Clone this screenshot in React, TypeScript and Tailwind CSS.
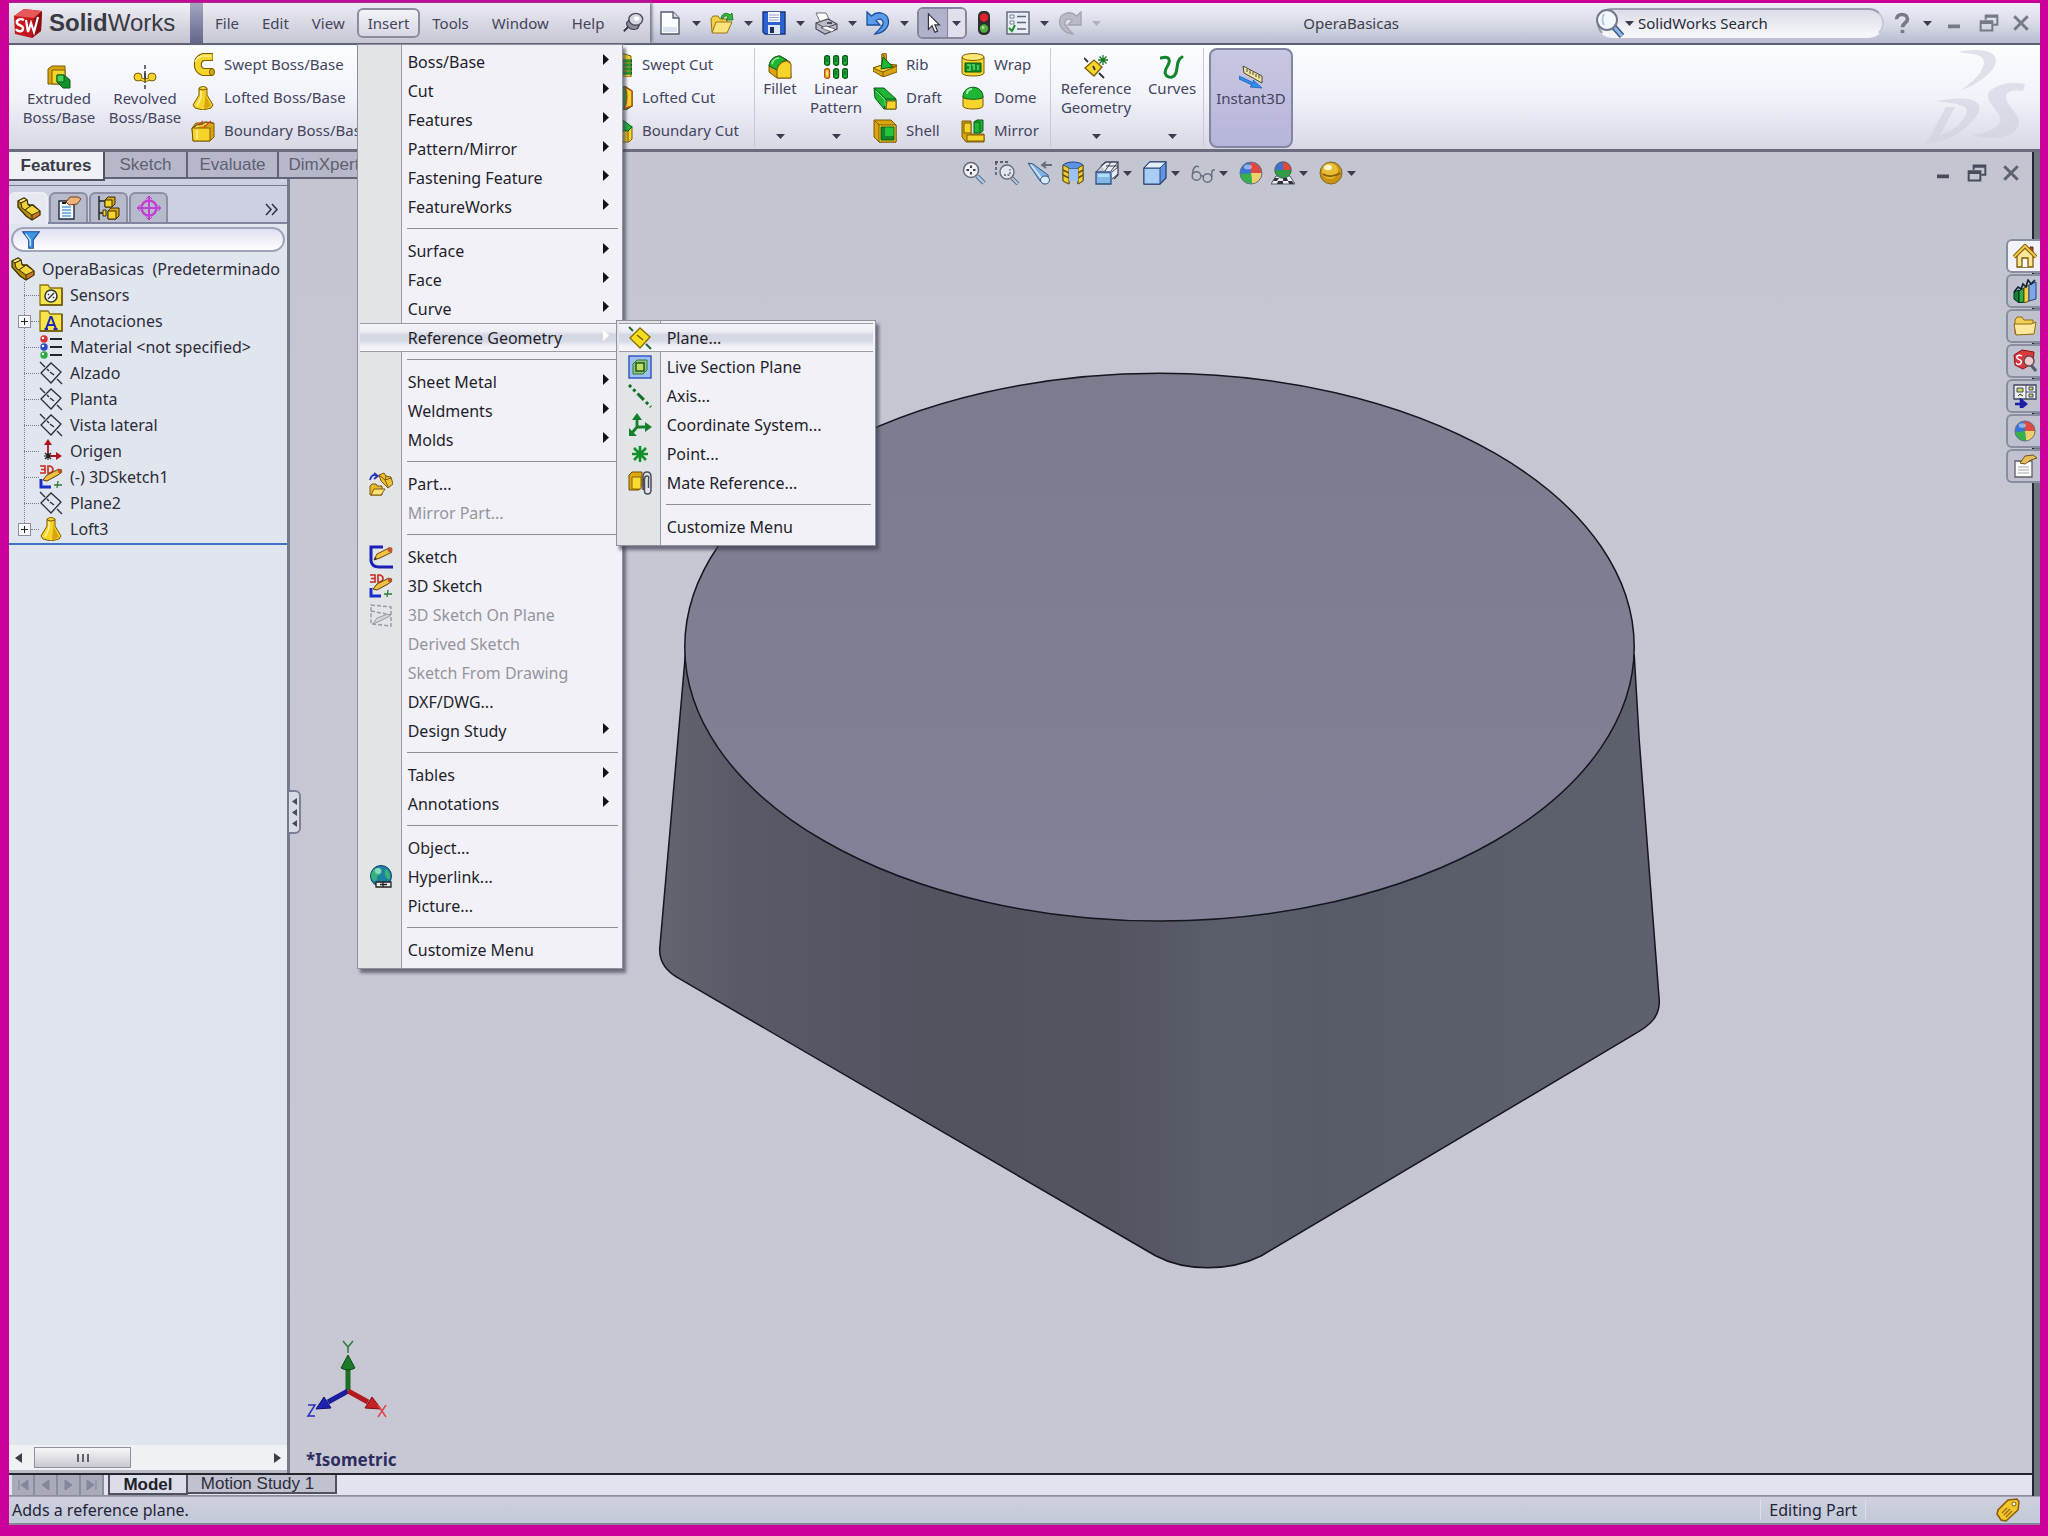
import React from "react";

type IconProps = { s?: number };
const Y = "#f6d42a";
const YD = "#d9a40c";
const YS = "#7d5a06";
const G = "#1fb636";
const GS = "#0b5a18";

function Ic({ s = 24, children, vb = "0 0 24 24" }: { s?: number; children: React.ReactNode; vb?: string }) {
  return (
    <svg width={s} height={s} viewBox={vb} fill="none" aria-hidden="true" className="block shrink-0">
      {children}
    </svg>
  );
}

const Down = ({ light = false }: { light?: boolean }) => (
  <svg width="9" height="5" viewBox="0 0 9 5" aria-hidden="true" className="block shrink-0">
    <path d="M0 0H9L4.5 5Z" fill={light ? "#b0b1bf" : "#3c3c4e"} />
  </svg>
);

/* ---------- title bar icons ---------- */
const LogoIcon = () => (
  <Ic s={32} vb="0 0 32 32">
    <path d="M2 9 12 2 30 4 29 24 20 31 3 27Z" fill="#c4161c" />
    <path d="M2 9 12 2 30 4 22 11Z" fill="#e8575a" />
    <path d="M22 11 30 4 29 24 20 31Z" fill="#8f0d12" />
    <path d="M12 13C8 11 4 13 5 16S12 18 11 22 5 24 4 22" stroke="#fff" strokeWidth="2.4" />
    <path d="M14 13 16 25 19 16 22 25 26 10" stroke="#fff" strokeWidth="2.2" />
  </Ic>
);
const PinIcon = () => (
  <Ic s={22}>
    <path d="M2 21 9 14" stroke="#33343f" strokeWidth="2" />
    <path d="M5 12C5 17 11 21 17 18L19 14 9 7Z" fill="#8b8d9b" stroke="#3d3e4c" strokeWidth="1.3" />
    <ellipse cx="15" cy="8" rx="7.500" ry="6.500" fill="#d4d6e0" stroke="#4c4d5c" strokeWidth="1.5" />
    <ellipse cx="16" cy="7" rx="3" ry="2.500" fill="#fff" />
  </Ic>
);
const NewIcon = () => (
  <Ic>
    <path d="M3 1H15L21 7V23H3Z" fill="#fbfcff" stroke="#555a6c" strokeWidth="1.4" />
    <path d="M15 1V7H21" fill="#d7dbe8" stroke="#555a6c" strokeWidth="1.3" />
    <path d="M5 16H19V21H5Z" fill="#d9e2ee" />
  </Ic>
);
const OpenIcon = () => (
  <Ic>
    <path d="M1 8 3 5H8L10 8H17V21H2Z" fill="#f3cf45" stroke="#9a7210" />
    <path d="M2 22 6 11H22L17 22Z" fill="#fbe57a" stroke="#9a7210" />
    <path d="M11 7C12 2 17 1 20 4L22 2 23 9 16 9 18 6C16 4 14 5 13 8Z" fill="#35b53c" stroke="#14701d" strokeWidth=".8" />
  </Ic>
);
const SaveIcon = () => (
  <Ic>
    <path d="M1 1H23V23H3L1 21Z" fill="#2c62d0" stroke="#17357e" strokeWidth="1.4" />
    <path d="M6 1H18V11H6Z" fill="#f5f7fc" />
    <path d="M7 4H17M7 6.500H17M7 9H17" stroke="#9aa6bf" />
    <path d="M6 14H18V23H6Z" fill="#dfe4ef" />
    <path d="M8 16H12V22H8Z" fill="#1b2e66" />
  </Ic>
);
const PrintIcon = () => (
  <Ic>
    <path d="M2 2H12L16 10 7 13Z" fill="#fff" stroke="#6c7080" />
    <path d="M2 12 14 8 23 13 23 18 11 23 2 18Z" fill="#b9bcc8" stroke="#4a4c59" strokeWidth="1.2" />
    <path d="M2 12 11 17 23 13" stroke="#4a4c59" />
    <path d="M7 17 18 21 21 18 12 15Z" fill="#fff" stroke="#555" strokeWidth=".8" />
    <path d="M13 12H18" stroke="#2a2b33" strokeWidth="1.5" />
  </Ic>
);
const UndoIcon = ({ grey = false, flip = false }: { grey?: boolean; flip?: boolean }) => (
  <Ic>
    <path
      transform={flip ? "translate(24 0) scale(-1 1)" : undefined}
      d="M1 1V14H14L10 9.500C13 7 18 8 17 13 16 17 12 19 9 23 17 22 23 17 22.500 10 22 2 12-1 5.500 5Z"
      fill={grey ? "#b9bac6" : "#5a9bea"}
      stroke={grey ? "#a2a3b0" : "#1c4f9e"}
      strokeWidth="1.3"
    />
  </Ic>
);
const CursorIcon = () => (
  <Ic s={22}>
    <path d="M7 2V19L11 15 14 22 17 21 14 14H19Z" fill="#fff" stroke="#33343f" strokeWidth="1.3" />
  </Ic>
);
const TrafficIcon = () => (
  <Ic>
    <rect x="6" y="0" width="12" height="24" rx="5" fill="#2c2f2e" />
    <circle cx="12" cy="6.500" r="4.200" fill="#e0222c" />
    <circle cx="12" cy="17.500" r="4.200" fill="#4fae3f" />
    <circle cx="11" cy="16.500" r="1.500" fill="#a5e08f" />
  </Ic>
);
const OptionsIcon = () => (
  <Ic>
    <rect x="1" y="1" width="22" height="22" fill="#e9edf4" stroke="#5d6478" strokeWidth="1.4" />
    <path d="M4 4H8V7H4ZM4 10H8V13H4Z" fill="#fff" stroke="#6a7ba0" />
    <path d="M3 17 6 20 9 14" stroke="#1c8f2c" strokeWidth="2" />
    <path d="M11 5.500H20M11 11.500H20M11 18H20" stroke="#5d6478" strokeWidth="1.6" />
  </Ic>
);
const HelpIcon = () => (
  <Ic s={22}>
    <path d="M6 8C6 1 18 1 18 8 18 12 12.500 12 12.500 16.500" stroke="#777988" strokeWidth="4" />
    <path d="M10.500 19.500H14.500V23H10.500Z" fill="#777988" />
  </Ic>
);
const MinIcon = ({ c = "#777988" }: { c?: string }) => (
  <Ic s={18}>
    <path d="M4 14H20V19H4Z" fill={c} />
  </Ic>
);
const RestoreIcon = ({ c = "#777988" }: { c?: string }) => (
  <Ic s={20}>
    <path d="M8 8V3H22V14H17M8 4.500H22" stroke={c} strokeWidth="2.400" />
    <path d="M2 10H16V21H2ZM2 12H16" stroke={c} strokeWidth="2.400" />
  </Ic>
);
const CloseIcon = ({ c = "#777988" }: { c?: string }) => (
  <Ic s={18}>
    <path d="M3 3 21 21M21 3 3 21" stroke={c} strokeWidth="4" />
  </Ic>
);

/* ---------- ribbon icons ---------- */
const ExtrudeIcon = () => (
  <Ic>
    <path d="M1 4 5 1H18L18 16 15 19H1Z" fill={YD} stroke={YS} />
    <path d="M5 5H18V19H5Z" fill={Y} stroke={YS} />
    <path d="M10 10H17L23 15V23H16L10 17Z" fill="#12922a" stroke={GS} />
    <path d="M10 10H17V17H10Z" fill="#43d356" stroke={GS} />
  </Ic>
);
const RevolveIcon = () => (
  <Ic>
    <path d="M12 0V4M12 6V18M12 20V24" stroke="#222" strokeWidth="1.300" />
    <path d="M6 13C9 16 15 16 18 13" stroke={YS} strokeWidth="3.500" />
    <circle cx="5" cy="12" r="4" fill={Y} stroke={YS} />
    <circle cx="19" cy="12" r="4" fill={Y} stroke={YS} />
    <path d="M8 14C10 15.500 14 15.500 16 14" stroke={Y} strokeWidth="2" />
    <path d="M12 8V16" stroke="#222" />
  </Ic>
);
const SweptIcon = () => (
  <Ic>
    <path d="M22 4H12A8 8 0 0 0 12 19H22" stroke={YS} strokeWidth="8" />
    <path d="M21.500 4H12A8 8 0 0 0 12 19H21.500" stroke={Y} strokeWidth="5.800" />
    <path d="M20 3H12A9 9 0 0 0 4 9" stroke="#fff2a0" strokeWidth="1.500" />
    <ellipse cx="21" cy="19" rx="2.500" ry="3.500" fill={YD} stroke={YS} />
  </Ic>
);
const LoftIcon = () => (
  <Ic>
    <path d="M8 2 12 0 16 2 16 9 22 19 20 22 12 24 4 22 2 19 8 9Z" fill={Y} stroke={YS} />
    <path d="M15 3 15 10 20 20 13 23Z" fill={YD} />
    <path d="M8 3 12 4 16 3" stroke={YS} />
    <path d="M10 5V11L6 20" stroke="#fff2a0" strokeWidth="1.500" />
  </Ic>
);
const BoundaryIcon = () => (
  <Ic>
    <path d="M1 9 5 4H23V18L19 22H2Z" fill={YD} stroke={YS} />
    <path d="M1 9H19V22H2Z" fill={Y} stroke={YS} />
    <path d="M3 9C6 2 10 9 14 3L22 4" stroke={YS} strokeWidth="1.300" fill="#f9e264" />
    <path d="M8 6 12 2M13 8 20 2" stroke="#d33a1a" strokeWidth="1.200" />
    <path d="M6 11V20" stroke="#fff2a0" strokeWidth="1.500" />
  </Ic>
);
const SweptCutIcon = () => (
  <Ic>
    <path d="M4 3 12 0 22 3V24H4Z" fill={Y} stroke={YS} />
    <path d="M8 8H23M8 12H23M8 16H23M8 20H23" stroke={GS} strokeWidth="3" />
    <path d="M9 8H22M9 12H22M9 16H22M9 20H22" stroke={G} strokeWidth="1.500" />
  </Ic>
);
const LoftCutIcon = () => (
  <Ic>
    <path d="M3 6 16 0 23 5V20L17 24H3Z" fill={G} stroke={GS} />
    <path d="M16 1 23 5V20L15 23Q20 12 16 1Z" fill={Y} stroke="#b5480b" strokeWidth="1.400" />
  </Ic>
);
const BoundaryCutIcon = () => (
  <Ic>
    <path d="M3 10H19L23 7V20L20 23H3Z" fill={Y} stroke={YS} />
    <path d="M4 11 14 1 23 8 19 12Z" fill={G} stroke={GS} />
    <path d="M19 12V23" stroke={YS} />
  </Ic>
);
const FilletIcon = () => (
  <Ic>
    <path d="M1 11C2 4 7 1 12 1L22 7 23 23H9L1 17Z" fill={YD} stroke={YS} />
    <path d="M1 11C2 4 7 1 12 1L19 5C13 6 10 10 9 15Z" fill={G} stroke={GS} />
    <path d="M9 15C10 10 14 6 19 6L23 9V23H9Z" fill={Y} stroke={YS} />
    <path d="M4 9C5 5 8 3 11 3" stroke="#9cf0a2" strokeWidth="1.500" />
  </Ic>
);
const LinearIcon = () => (
  <Ic>
    {[0, 1, 2].map((c) =>
      [0, 1].map((r) => {
        const seed = c === 0 && r === 1;
        return (
          <g key={`${c}${r}`} transform={`translate(${c * 9} ${r * 13})`}>
            <rect x=".7" y=".7" width="4.800" height="9.500" rx="2" fill={seed ? "#f3c62c" : G} stroke={seed ? "#c14d14" : GS} strokeWidth="1.400" />
            <path d="M3 3V7" stroke={seed ? "#fff3b0" : "#063"} strokeWidth="1.300" />
          </g>
        );
      })
    )}
  </Ic>
);
const RibIcon = () => (
  <Ic>
    <path d="M9 1 13 0 14 11 24 12V19L10 24 0 18V15L9 12Z" fill={YD} stroke={YS} />
    <path d="M9 1 11 3V14L24 13 10 19 0 15 9 12Z" fill={Y} stroke={YS} />
    <path d="M10 19V24" stroke={YS} />
    <path d="M10 4 20 14 8 16Z" fill={G} stroke={GS} />
  </Ic>
);
const DraftIcon = () => (
  <Ic>
    <path d="M1 2H11L23 13V23H11L2 12Z" fill={G} stroke={GS} />
    <path d="M1 2 13 13H23M13 13 11 23" stroke={GS} />
    <path d="M14 15H23V23H13Z" fill={Y} stroke={YS} />
    <path d="M3 5 12 14V20" stroke="#84ea8e" />
  </Ic>
);
const ShellIcon = () => (
  <Ic>
    <path d="M1 1H18L23 6V23H6L1 18Z" fill={YD} stroke={YS} />
    <path d="M6 6H23V23H6Z" fill={Y} stroke={YS} />
    <path d="M8 8H21V21H8Z" fill="#13862a" stroke={GS} />
    <path d="M12 8.500H20.500V17H12Z" fill="#25c23b" />
    <path d="M2 2 6 6" stroke={YS} />
  </Ic>
);
const WrapIcon = () => (
  <Ic>
    <path d="M1 4V20C1 24 23 24 23 20V4Z" fill={Y} stroke={YS} />
    <ellipse cx="12" cy="4" rx="11" ry="3.500" fill="#fbe771" stroke={YS} />
    <path d="M4 10H20V19H4Z" fill="#158a2a" stroke={GS} />
    <path d="M6 12H9V17H6M11 12H13V17M17 12V17" stroke="#59e06a" strokeWidth="1.500" />
  </Ic>
);
const DomeIcon = () => (
  <Ic>
    <path d="M2 10V20C2 24 22 24 22 20V10Z" fill={Y} stroke={YS} />
    <path d="M2 11C2 -2 22 -2 22 11 22 14 2 14 2 11Z" fill={G} stroke={GS} />
    <path d="M6 8C6 5 8 3 11 3" stroke="#9cf0a2" strokeWidth="2" />
  </Ic>
);
const MirrorIcon = () => (
  <Ic>
    <path d="M1 2H10V15H23V23H5L1 18Z" fill={YD} stroke={YS} />
    <path d="M3 4H10V14H3ZM6 16H23V22H6Z" fill={Y} stroke={YS} />
    <path d="M13 3 16 1H22V12L19 14H13Z" fill={G} stroke={GS} />
    <path d="M13 3H19V14" stroke={GS} />
  </Ic>
);
const RefGeoIcon = () => (
  <Ic>
    <path d="M1 13 10 5 18 12 10 21Z" fill={Y} stroke={YS} strokeWidth="1.300" />
    <path d="M0 3 4 7M15 18 20 23M9 11 11 15" stroke="#333" strokeWidth="1.800" />
    <path d="M19 0V10M14 5H24M15.500 1.500 22.500 8.500M22.500 1.500 15.500 8.500" stroke="#147a22" strokeWidth="1.300" />
  </Ic>
);
const CurvesIcon = () => (
  <Ic>
    <path d="M1 3C10 0 11 6 7 12 3 18 6 23 12 22 20 20 14 6 22 2" stroke="#12852a" strokeWidth="3" strokeLinecap="round" />
  </Ic>
);
const InstantIcon = () => (
  <Ic>
    <path d="M4 1 23 11V18L5 8Z" fill="#f1e7a4" stroke="#4b4634" />
    <path d="M8 4V7M11 5.500V9M14 7V10M17 9V12M20 10V13.500" stroke="#4b4634" />
    <path d="M0 11 15 18 14 15 23 23 11 22 13 20 0 14Z" fill="#2f8df0" stroke="#1a5fc0" strokeWidth=".8" />
  </Ic>
);

/* ---------- heads-up view icons ---------- */
const ZoomFitIcon = () => (
  <Ic>
    <path d="M15 15 22 22" stroke="#55607a" strokeWidth="4.500" />
    <path d="M15 15 22 22" stroke="#a9c5e8" strokeWidth="2.500" />
    <circle cx="9" cy="9" r="7.500" fill="#eef0f5" stroke="#666a7c" strokeWidth="1.500" />
    <path d="M9 4.500V7M9 11V13.500M4.500 9H7M11 9H13.500" stroke="#3c3d48" strokeWidth="2" />
  </Ic>
);
const ZoomAreaIcon = () => (
  <Ic>
    <path d="M0 1H15M1 1V14" stroke="#3d3e4c" strokeDasharray="3 2" strokeWidth="1.300" />
    <path d="M17 17 23 23" stroke="#666a7c" strokeWidth="4" />
    <path d="M17 17 23 23" stroke="#b4c4da" strokeWidth="2" />
    <circle cx="12" cy="11" r="7" fill="#e3e5ee" stroke="#666a7c" strokeWidth="1.400" />
    <path d="M9 14H15V8" stroke="#55586a" strokeDasharray="2 1.500" strokeWidth="1.300" />
  </Ic>
);
const PrevViewIcon = () => (
  <Ic>
    <path d="M0 2 5 3 20 14 21 20 16 23 12 20Z" fill="#7fb2e8" stroke="#38537f" />
    <path d="M3 4 14 18" stroke="#d9ecfb" strokeWidth="1.500" />
    <ellipse cx="17" cy="19" rx="4.500" ry="4" fill="#d6ebfb" stroke="#38537f" />
    <path d="M24 4H15M18 1 14 4 18 7" stroke="#666a7c" strokeWidth="1.800" />
  </Ic>
);
const SectionIcon = () => (
  <Ic>
    <path d="M2 4C6 0 18 0 22 4V20L17 23V8H8V23L2 20Z" fill="#5b93e3" stroke="#25427f" />
    <path d="M2 4 8 7V23L2 20ZM17 7 22 4V20L17 23Z" fill="#f0cf35" stroke="#6b5208" />
    <path d="M2 9 8 12M2 14 8 17M17 12 22 9M17 17 22 14" stroke="#6b5208" strokeWidth="1.500" />
    <path d="M8 8H17V20H8Z" fill="#9cc2f2" />
  </Ic>
);
const ViewOrientIcon = () => (
  <Ic>
    <path d="M6 5 11 1H23V14L19 18" fill="#e8ebf2" stroke="#3d4356" strokeWidth="1.300" />
    <path d="M1 11 10 1M10 10 16 1M16 10 23 1M17 18 23 13M17 11 23 6M11 5H23" stroke="#3d4356" />
    <path d="M1 11H16V23H1Z" fill="#83b7ea" stroke="#31507f" strokeWidth="1.300" />
    <path d="M3 13H14V16H3Z" fill="#b8dcf7" />
  </Ic>
);
const DisplayIcon = () => (
  <Ic>
    <path d="M1 7 7 1H23V17L17 23H1Z" fill="#5f95e4" stroke="#2c4377" strokeWidth="1.300" />
    <path d="M1 7H17V23H1Z" fill="#a9cdf3" stroke="#2c4377" />
    <path d="M1 7 7 1H23L17 7Z" fill="#e4effb" stroke="#2c4377" />
  </Ic>
);
const GlassesIcon = () => (
  <Ic>
    <circle cx="5.500" cy="15" r="4.300" stroke="#6a6e80" strokeWidth="1.500" />
    <circle cx="16.500" cy="17" r="4.300" stroke="#6a6e80" strokeWidth="1.500" />
    <path d="M10 15C11 14 12 15 12 16M1.500 13C2 6 5 4 8 6M21 16C20 9 22 8 24 9" stroke="#6a6e80" strokeWidth="1.500" />
  </Ic>
);
const BallIcon = ({ s = 24 }: IconProps) => (
  <Ic s={s}>
    <circle cx="12" cy="12" r="11" fill="#3573dd" />
    <path d="M12 12 11 1A11 11 0 0 1 23 12Z" fill="#dc4a44" />
    <path d="M12 12H23A11 11 0 0 1 13 23Z" fill="#ecd06a" />
    <path d="M12 12 13 23A11 11 0 0 1 1 13Z" fill="#35b04a" />
    <circle cx="12" cy="12" r="11" stroke="#6c7187" strokeWidth="1" />
    <ellipse cx="9" cy="6" rx="4" ry="2.500" fill="#fff" opacity=".45" />
  </Ic>
);
const SceneIcon = () => (
  <Ic>
    <path d="M0 23 5 15H19L24 23Z" fill="#eef0f5" stroke="#55586a" />
    <path d="M4 17H8L6 20H2ZM12 17H16L17 20H12ZM7 20H12V23H6ZM17 20H21L23 23H18Z" fill="#32333c" />
    <g transform="translate(3 0) scale(.75)">
      <circle cx="12" cy="12" r="11" fill="#3f72cf" />
      <path d="M12 12V1A11 11 0 0 1 23 12Z" fill="#e2473c" />
      <path d="M1 12H23A11 11 0 0 1 1 12Z" fill="#2f9f45" />
      <circle cx="12" cy="12" r="11" stroke="#4a4e60" />
    </g>
  </Ic>
);
const GoldBallIcon = () => (
  <Ic>
    <circle cx="12" cy="12" r="11" fill="#c9920f" stroke="#7a6a3a" />
    <circle cx="11" cy="10" r="8" fill="#e9bd35" />
    <path d="M4 13C8 16 16 16 21 12" stroke="#8f6208" strokeWidth="2" />
    <ellipse cx="9" cy="6.500" rx="4" ry="2.800" fill="#fff6cf" />
  </Ic>
);

/* ---------- tree / manager icons ---------- */
const PartIcon = () => (
  <Ic>
    <path d="M1 4 7 1 10 3 11 8 16 8 23 14 23 18 15 23 9 19 1 10Z" fill="#b98d0c" stroke="#3d2e05" strokeWidth="1.300" />
    <path d="M1 4 7 1 10 3 4 6Z" fill="#fbe670" stroke="#3d2e05" />
    <path d="M4 6 10 3 11 8 14 9 8 13 5 11Z" fill="#f0d137" stroke="#3d2e05" />
    <path d="M8 13 15 8 23 14 15 18Z" fill="#f3d63c" stroke="#3d2e05" />
    <path d="M15 18V23" stroke="#3d2e05" />
    <path d="M16 19 22 15.500V18L16 21.500Z" fill="#d9702c" />
  </Ic>
);
const PropIcon = () => (
  <Ic>
    <path d="M2 5H17V23H2Z" fill="#f5f9fd" stroke="#222a3c" strokeWidth="1.400" />
    <path d="M5 11H14M5 14H14M5 17H14M5 20H14" stroke="#5aa2d8" strokeWidth="1.300" />
    <path d="M9 6 13 1H21L24 3 20 8 12 9Z" fill="#efb27b" stroke="#74401a" />
    <path d="M5 7H9" stroke="#222" strokeWidth="2" />
  </Ic>
);
const ConfigIcon = () => (
  <Ic>
    <path d="M2 0V24M2 5H9M2 17H9" stroke="#222" strokeWidth="1.400" />
    <path d="M8 4 11 1H18V8L15 11H8ZM11 15 14 12H22V20L19 23H11Z" fill={YD} stroke="#3d2e05" />
    <path d="M8 4H15V11H8ZM11 15H19V23H11Z" fill={Y} stroke="#3d2e05" />
    <path d="M6 14H9V20H6Z" fill={Y} stroke="#3d2e05" />
  </Ic>
);
const DimIcon = () => (
  <Ic>
    <circle cx="12" cy="12" r="7.500" stroke="#c23fd6" strokeWidth="2.400" />
    <path d="M12 0V24M0 12H24" stroke="#c23fd6" strokeWidth="2" />
    <path d="M9 3 12 0 15 3M9 21 12 24 15 21M3 9 0 12 3 15M21 9 24 12 21 15" stroke="#c23fd6" />
  </Ic>
);
const FunnelIcon = () => (
  <Ic s={18}>
    <path d="M1 1H23L15 12V23H9V12Z" fill="#3f94e6" stroke="#1a4a94" strokeWidth="1.500" />
    <path d="M5 4 11 12V20" stroke="#bfe0fb" strokeWidth="2" />
  </Ic>
);
const Folder = ({ children }: { children: React.ReactNode }) => (
  <Ic>
    <path d="M1 2H9L11 5H23V22H1Z" fill="#f7e34a" stroke="#8f7612" strokeWidth="1.300" />
    <path d="M23 5V22H1" stroke="#6e5808" strokeWidth="1.500" />
    {children}
  </Ic>
);
const SensorIcon = () => (
  <Folder>
    <circle cx="12" cy="13" r="6" fill="#f2f4f8" stroke="#333" strokeWidth="1.500" />
    <path d="M9 16 15 10M9 11 10 12M15 15 14 14" stroke="#333" strokeWidth="1.400" />
  </Folder>
);
const AnnotIcon = () => (
  <Folder>
    <path d="M7 20 11.500 8H12.500L17 20M9 16H15M5.500 20H9M14.500 20H18.500" stroke="#1b27b8" strokeWidth="2" />
  </Folder>
);
const MaterialIcon = () => (
  <Ic>
    <circle cx="5" cy="4" r="3.700" fill="#d92f33" />
    <circle cx="5" cy="12" r="3.700" fill="#2a49c8" />
    <circle cx="5" cy="20" r="3.700" fill="#2bab43" />
    <circle cx="4" cy="3" r="1.200" fill="#fff" />
    <circle cx="4" cy="11" r="1.200" fill="#fff" />
    <circle cx="4" cy="19" r="1.200" fill="#fff" />
    <path d="M11 4H23M11 12H23M11 20H23" stroke="#222" strokeWidth="2.200" />
  </Ic>
);
const PlaneIcon = () => (
  <Ic>
    <path d="M2 12 12 2 22 11 12 22Z" stroke="#2c2d38" strokeWidth="1.300" />
    <path d="M1 1 6 6M8 8 10 10M11 11 15 14M18 18 23 23" stroke="#2c2d38" strokeWidth="1.400" />
  </Ic>
);
const OriginIcon = () => (
  <Ic>
    <path d="M9 17V2M9 17H20" stroke="#b01420" strokeWidth="1.800" />
    <path d="M5 6 9 0 13 6ZM17 13 23 17 17 21Z" fill="#b01420" />
    <path d="M5 17H12M9 14V21M6 14 12 20M12 14 6 20" stroke="#222" strokeWidth="1.200" />
  </Ic>
);
const Sketch3DIcon = () => (
  <Ic>
    <path d="M1 1H6V8H1M2 4.500H6M9 1V8H11Q14 7 14 4.500T11 1Z" stroke="#c92a1c" strokeWidth="1.600" />
    <path d="M2 14V22H12M2 22H4" stroke="#1b2ccc" strokeWidth="3" />
    <path d="M18 23 19 16M15 20H23" stroke="#2e7a3a" strokeWidth="1.300" />
    <path d="M4 15 8 10 20 4 23 7 19 10 8 16Z" fill="#eec041" stroke="#5e3d05" />
    <circle cx="21" cy="6" r="2.300" fill="#b8532e" />
  </Ic>
);
const SketchIcon = () => (
  <Ic>
    <path d="M14 2H2V16Q3 22 10 22H24" stroke="#1a1fb8" strokeWidth="3" />
    <path d="M5 15 8 9 20 3 23 7 11 13Z" fill="#f0c545" stroke="#6b4608" />
    <circle cx="21" cy="4.500" r="2.500" fill="#c05a33" />
    <path d="M5 15 6 12 8 14Z" fill="#333" />
  </Ic>
);
const SketchPlaneIcon = () => (
  <Ic>
    <path d="M2 2 22 4V23L2 21ZM2 8 22 12" stroke="#9a9ca4" strokeWidth="1.500" strokeDasharray="4 2" />
    <path d="M4 21 8 15 19 11 21 13 11 18Z" fill="#d4d6da" stroke="#9a9ca4" />
  </Ic>
);
const InsertPartIcon = () => (
  <Ic>
    <path d="M1 8C2 3 5 2 8 4M5 1 9 4 5 7" stroke="#2a35b8" strokeWidth="1.800" />
    <path d="M10 3 15 1 17 4 22 5 24 12 19 16 12 9Z" fill="#eebf33" stroke="#80580a" />
    <path d="M10 3 16 8 17 4M16 8 22 6M16 8 19 15" stroke="#80580a" />
    <path d="M1 14 3 12H7L8 14H13V23H1Z" fill="#e8b82c" stroke="#80580a" />
    <path d="M2 23 5 17H16L12 23Z" fill="#fbe27a" stroke="#80580a" />
  </Ic>
);
const GlobeIcon = () => (
  <Ic>
    <circle cx="12" cy="11" r="10.500" fill="#1c7fa4" stroke="#0d3f66" />
    <path d="M4 5C8 1 14 3 13 7S8 9 8 13 5 17 3 14 2 8 4 5ZM16 4C20 5 22 9 21 14 17 15 15 10 16 4Z" fill="#38b27d" />
    <circle cx="9" cy="6" r="3" fill="#bff0f2" opacity=".6" />
    <path d="M7 17H14V22H7ZM14 17H22V22H14ZM11 19.500H18" fill="#e8eaee" stroke="#222" strokeWidth="1.300" />
  </Ic>
);
const MenuPlaneIcon = () => (
  <Ic>
    <path d="M2 12 12 2 22 11 12 22Z" fill="#f5dc1f" stroke="#8a6d05" strokeWidth="1.300" />
    <path d="M1 1 5 5M18 18 23 23" stroke="#1d6b34" strokeWidth="2" />
    <path d="M9 9 15 14" stroke="#7d5a06" strokeWidth="1.500" />
  </Ic>
);
const LiveSectionIcon = () => (
  <Ic>
    <rect x="1" y="1" width="22" height="22" fill="#9ebdf2" stroke="#3459c4" strokeWidth="1.500" />
    <path d="M5 9 9 5H19V15L15 19H5Z" fill="#8fc27a" stroke="#2e7a32" />
    <path d="M8 8H16V16H8Z" fill="#c4dc5f" stroke="#1e5a22" strokeWidth="1.500" />
  </Ic>
);
const AxisIcon = () => (
  <Ic>
    <path d="M1 1 23 23" stroke="#12702a" strokeWidth="3" strokeDasharray="3 3 3 3 9 3 3 3" />
  </Ic>
);
const CoordIcon = () => (
  <Ic>
    <path d="M9 14V3M9 14H21M9 14 3 21" stroke="#12802a" strokeWidth="2.800" />
    <path d="M4 7 9 0 14 7ZM17 9 24 14 17 19ZM1 15V23H9Z" fill="#12802a" />
  </Ic>
);
const PointIcon = () => (
  <Ic>
    <path d="M12 4V20M4 12H20M6 6 18 18M18 6 6 18" stroke="#12902a" strokeWidth="2.600" />
  </Ic>
);
const MateIcon = () => (
  <Ic>
    <path d="M1 4 4 1H14V15L11 19H1Z" fill="#e0a910" stroke="#6e4c05" />
    <path d="M4 6H13V18H4Z" fill="#f8dc33" stroke="#8a6006" />
    <path d="M15 19V6Q15 1 19 1T23 6V19Q23 23 19.500 23T16.500 19V8Q16.500 5 19 5T20.500 8V17" stroke="#4a4c59" strokeWidth="1.500" />
  </Ic>
);
const TagIcon = () => (
  <Ic>
    <path d="M12 2 21 1 23 4 22 12 10 23 5 22 1 16 2 12Z" fill="#f3c62a" stroke="#8a5a0a" strokeWidth="1.500" />
    <circle cx="18" cy="6" r="2" fill="#fff" stroke="#8a5a0a" />
    <path d="M6 15 11 10M8 17 14 11M10 19 16 13" stroke="#9a6a10" strokeWidth="1.200" />
  </Ic>
);

/* ---------- task pane icons ---------- */
const HomeIcon = () => (
  <Ic>
    <path d="M17 3H20V9H17Z" fill="#b5522a" stroke="#5f2a10" />
    <path d="M4 11V23H20V11L12 4Z" fill="#fae69a" stroke="#7d5a06" strokeWidth="1.300" />
    <path d="M1 13 12 2 23 13" stroke="#7d5a06" strokeWidth="4" />
    <path d="M1 13 12 2 23 13" stroke="#f3c94a" strokeWidth="2" />
    <path d="M9 23V14H15V23" fill="#fff" stroke="#7d5a06" strokeWidth="1.300" />
  </Ic>
);
const LibraryIcon = () => (
  <Ic>
    <path d="M1 13 6 11V24L1 20Z" fill="#15803a" stroke="#052a12" />
    <path d="M6 12 11 9V23L6 24Z" fill="#2ab04a" stroke="#052a12" />
    <path d="M11 9 16 6V22L11 24Z" fill="#f0d049" stroke="#5e4a04" />
    <path d="M16 6 23 3V20L16 22Z" fill="#7ea6e8" stroke="#25427f" />
    <path d="M1 13 5 8 8 10 10 5 13 8 15 1 18 5 22 1" stroke="#123" strokeWidth="1.600" />
  </Ic>
);
const FolderOpenIcon = () => (
  <Ic>
    <path d="M2 6 4 3H9L11 6H20V20H2Z" fill="#f1cf58" stroke="#8f6a10" />
    <path d="M3 21 1 10H18L23 8 21 20Z" fill="#fbe89a" stroke="#8f6a10" />
  </Ic>
);
const SearchRedIcon = () => (
  <Ic>
    <path d="M1 6 9 1 21 3 20 14 10 20 2 16Z" fill="#d83a40" stroke="#8f1218" />
    <path d="M9 7C6 5 3 7 4 9S10 11 8 14 4 15 3 14" stroke="#fff" strokeWidth="1.500" />
    <circle cx="16" cy="12" r="5" fill="#f2c9cc" stroke="#6a4a52" strokeWidth="1.500" />
    <path d="M18 16 23 22" stroke="#555a6c" strokeWidth="3" />
  </Ic>
);
const PaletteIcon = () => (
  <Ic>
    <path d="M1 1H23V15H1Z" fill="#eef2f5" stroke="#3f4760" strokeWidth="1.300" />
    <path d="M13 1V15M13 8H23M4 4H10V8H4ZM5 12 7 10 10 12M16 3H20V6H16ZM16 10H20V13H16Z" stroke="#3f4760" fill="#cfd75c" />
    <path d="M2 20H10M8 16 13 20 8 24Z" stroke="#1b1fa8" strokeWidth="2.500" fill="#1b1fa8" />
  </Ic>
);
const CustomPropIcon = () => (
  <Ic>
    <path d="M2 7H19V23H2Z" fill="#fbfbf7" stroke="#5d5f6b" strokeWidth="1.300" />
    <path d="M5 13H16M5 16H16M5 19H16" stroke="#a5a7b2" />
    <path d="M7 9 12 2 20 1 24 4 18 6 12 10Z" fill="#e8bd5c" stroke="#74501a" />
  </Ic>
);

/* ---------- menus ---------- */
type Item = { t: string; sub?: boolean; off?: boolean; icon?: React.ReactNode; hot?: boolean } | null;

const insertItems: Item[] = [
  { t: "Boss/Base", sub: true },
  { t: "Cut", sub: true },
  { t: "Features", sub: true },
  { t: "Pattern/Mirror", sub: true },
  { t: "Fastening Feature", sub: true },
  { t: "FeatureWorks", sub: true },
  null,
  { t: "Surface", sub: true },
  { t: "Face", sub: true },
  { t: "Curve", sub: true },
  { t: "Reference Geometry", sub: true, hot: true },
  null,
  { t: "Sheet Metal", sub: true },
  { t: "Weldments", sub: true },
  { t: "Molds", sub: true },
  null,
  { t: "Part...", icon: <InsertPartIcon /> },
  { t: "Mirror Part...", off: true },
  null,
  { t: "Sketch", icon: <SketchIcon /> },
  { t: "3D Sketch", icon: <Sketch3DIcon /> },
  { t: "3D Sketch On Plane", off: true, icon: <SketchPlaneIcon /> },
  { t: "Derived Sketch", off: true },
  { t: "Sketch From Drawing", off: true },
  { t: "DXF/DWG..." },
  { t: "Design Study", sub: true },
  null,
  { t: "Tables", sub: true },
  { t: "Annotations", sub: true },
  null,
  { t: "Object..." },
  { t: "Hyperlink...", icon: <GlobeIcon /> },
  { t: "Picture..." },
  null,
  { t: "Customize Menu" },
];

const geometryItems: Item[] = [
  { t: "Plane...", icon: <MenuPlaneIcon />, hot: true },
  { t: "Live Section Plane", icon: <LiveSectionIcon /> },
  { t: "Axis...", icon: <AxisIcon /> },
  { t: "Coordinate System...", icon: <CoordIcon /> },
  { t: "Point...", icon: <PointIcon /> },
  { t: "Mate Reference...", icon: <MateIcon /> },
  null,
  { t: "Customize Menu" },
];

function Menu({ items, children }: { items: Item[]; children?: React.ReactNode }) {
  return (
    <div
      role="menu"
      className="relative border border-[#8f919d] bg-[linear-gradient(90deg,#e2e5e8_0,#e2e5e8_43px,#9a9ca5_43px,#9a9ca5_44px,#f2f1f8_44px)] px-0.5 pb-1 pt-0.5 text-[16px] text-[#1f1f2b] shadow-[3px_4px_3px_rgba(60,62,80,0.65)]"
    >
      {items.map((it, i) =>
        it === null ? (
          <div key={i} role="separator" className="ml-[47px] mr-0.5 flex h-[15px] items-center">
            <div className="h-px w-full bg-[#8d8e97]" />
          </div>
        ) : (
          <div key={i} className="relative">
            <button
              type="button"
              role="menuitem"
              disabled={it.off}
              className={
                "flex h-[29px] w-full items-center border-y text-left " +
                (it.hot
                  ? "border-[#9a9ca6] bg-[linear-gradient(180deg,#f4f4fa_0%,#ececf4_28%,#d3d7e2_40%,#d8dbe6_65%,#f0f0f7_80%,#f6f6fb_100%)]"
                  : "border-transparent")
              }
            >
              <span className="flex w-[33px] justify-end">{it.icon}</span>
              <span className={"ml-[15px] flex-1 whitespace-nowrap " + (it.off ? "text-[#94959d]" : "")}>{it.t}</span>
              {it.sub && (
                <svg width="6" height="11" viewBox="0 0 6 11" aria-hidden="true" className="mb-1 mr-[11px]">
                  <path d="M0 0 6 5.500 0 11Z" fill={it.hot ? "#ffffff" : "#111118"} />
                </svg>
              )}
            </button>
            {it.hot && children}
          </div>
        )
      )}
    </div>
  );
}

/* ---------- ribbon pieces ---------- */
const labelCls = "text-center text-[15px] leading-[19px] text-[#44445f]";

function Big({ icon, lines, w, drop = false }: { icon: React.ReactNode; lines: string[]; w: string; drop?: boolean }) {
  return (
    <button type="button" className={"flex h-[99px] shrink-0 flex-col items-center " + w + (drop ? " pt-[7px]" : " pt-[17px]")}>
      {icon}
      <span className={labelCls}>
        {lines.map((l) => (
          <span key={l} className="block whitespace-nowrap">
            {l}
          </span>
        ))}
      </span>
      {drop && (
        <span className="mt-auto pb-2">
          <Down />
        </span>
      )}
    </button>
  );
}

function Stack({ rows, w }: { rows: [React.ReactNode, string][]; w: string }) {
  return (
    <div className={"flex shrink-0 flex-col " + w}>
      {rows.map(([icon, label]) => (
        <button key={label} type="button" className="flex h-[33px] items-center gap-[9px] whitespace-nowrap text-[15px] text-[#44445f]">
          {icon}
          {label}
        </button>
      ))}
    </div>
  );
}

const Sep = () => <div className="h-[99px] w-px shrink-0 bg-[#c9cad8]" />;

function DropTool({ icon, light = false }: { icon: React.ReactNode; light?: boolean }) {
  return (
    <div className="flex items-center">
      <button type="button" className="flex w-[34px] justify-center">
        {icon}
      </button>
      <button type="button" aria-label="More" className="flex w-[18px] justify-center">
        <Down light={light} />
      </button>
    </div>
  );
}

function ViewTool({ icon, drop = false }: { icon: React.ReactNode; drop?: boolean }) {
  return (
    <div className="flex items-center">
      <button type="button" className="flex w-[26px] justify-center">
        {icon}
      </button>
      {drop && (
        <button type="button" aria-label="More" className="flex w-4 justify-center">
          <Down />
        </button>
      )}
    </div>
  );
}

function TitleBar() {
  return (
    <header className="relative z-30 flex h-[42px] shrink-0 items-center border-b-2 border-[#5d5f70] bg-linear-to-b from-[#f0effb] via-[#d9dce7] to-[#b9bbd0]">
      <div className="flex h-full items-center shadow-[2px_0_3px_#6d6f80]">
        <div className="flex h-full w-[181px] items-center gap-[5px] bg-linear-to-b from-[#f0f0f6] to-[#c3c4d0] pl-[3px]">
          <LogoIcon />
          <span className="font-['Liberation_Sans',sans-serif] text-[24px] leading-none text-[#3a3a44]">
            <b>Solid</b>Works
          </span>
        </div>
        <div className="h-full w-[13px] bg-linear-to-b from-[#a4a6bf] to-[#63668c]" />
        <nav className="flex h-full items-center gap-px bg-linear-to-b from-[#ecebf4] to-[#c6c7d4] pl-px pr-1 text-[15px] text-[#44445a]">
          {["File", "Edit", "View"].map((m) => (
            <button key={m} type="button" className="px-[11px]">
              {m}
            </button>
          ))}
          <div className="relative flex h-full items-center">
            <button type="button" className="h-[30px] rounded-md border-2 border-[#8c8d9c] bg-linear-to-b from-[#f4f4fa] to-[#d6d7e2] px-[9px]">
              Insert
            </button>
            <div className="absolute left-0 top-[41px] w-[266px]">
              <Menu items={insertItems}>
                <div className="absolute -top-[3px] left-[256px] z-10 w-[260px]">
                  <Menu items={geometryItems} />
                </div>
              </Menu>
            </div>
          </div>
          {["Tools", "Window", "Help"].map((m) => (
            <button key={m} type="button" className="px-[11px]">
              {m}
            </button>
          ))}
          <button type="button" aria-label="Pin menu" className="ml-1 px-0.5">
            <PinIcon />
          </button>
        </nav>
      </div>
      <div className="flex items-center pl-[3px]">
        <DropTool icon={<NewIcon />} />
        <DropTool icon={<OpenIcon />} />
        <DropTool icon={<SaveIcon />} />
        <DropTool icon={<PrintIcon />} />
        <DropTool icon={<UndoIcon />} />
        <div className="ml-1 flex h-8 w-[50px] overflow-hidden rounded-md border-2 border-[#85869c]">
          <button type="button" aria-label="Select" className="flex w-[29px] items-center justify-center border-r border-[#85869c] bg-[#b0b1cb]">
            <CursorIcon />
          </button>
          <button type="button" aria-label="Select options" className="flex flex-1 items-center justify-center bg-[#dfe0ec]">
            <Down />
          </button>
        </div>
        <button type="button" aria-label="Rebuild" className="flex w-[34px] justify-center">
          <TrafficIcon />
        </button>
        <DropTool icon={<OptionsIcon />} />
        <DropTool icon={<UndoIcon grey flip />} light />
      </div>
      <h1 className="flex-1 text-center text-[15px] text-[#3c3d4c]">OperaBasicas</h1>
      <div className="flex h-[30px] w-[287px] items-center rounded-full border-2 border-[#9b9cae] border-b-[#f4f4fa] border-r-[#c8c9d6] bg-linear-to-b from-[#dcdde8] to-[#f6f8fa]">
        <svg width="30" height="31" viewBox="0 0 30 31" fill="none" aria-hidden="true" className="-ml-1 shrink-0">
          <path d="M19 19 27 28" stroke="#3d5a84" strokeWidth="6" />
          <path d="M19 19 27 28" stroke="#8db8e6" strokeWidth="3" />
          <circle cx="12" cy="12" r="10" fill="#f2f8fd" stroke="#74788c" strokeWidth="2" />
          <path d="M9 6C7 9 7 14 9 17" stroke="#b8c6da" strokeWidth="2" />
        </svg>
        <Down />
        <input aria-label="SolidWorks Search" defaultValue="SolidWorks Search" className="ml-1 min-w-0 flex-1 bg-transparent text-[15px] text-[#2a2b38] outline-none" />
      </div>
      <div className="flex items-center pl-0.5 pr-1">
        <button type="button" aria-label="Help" className="flex w-8 justify-center"><HelpIcon /></button>
        <button type="button" aria-label="Help options" className="flex w-[18px] justify-center"><Down /></button>
        <button type="button" aria-label="Minimize" className="flex w-9 justify-center"><MinIcon /></button>
        <button type="button" aria-label="Restore" className="flex w-[34px] justify-center"><RestoreIcon /></button>
        <button type="button" aria-label="Close" className="flex w-[30px] justify-center"><CloseIcon /></button>
      </div>
    </header>
  );
}

function Ribbon() {
  return (
    <div className="flex h-[107px] shrink-0 items-start border-b-[3px] border-[#6b6d7e] bg-linear-to-b from-[#fbfeff] via-[#f1f3fa] to-[#d7d8e3] pl-[7px] pt-[3px]">
      <Big icon={<ExtrudeIcon />} lines={["Extruded", "Boss/Base"]} w="w-[86px]" />
      <Big icon={<RevolveIcon />} lines={["Revolved", "Boss/Base"]} w="w-[86px]" />
      <Stack w="ml-[3px] w-[418px]" rows={[[<SweptIcon />, "Swept Boss/Base"], [<LoftIcon />, "Lofted Boss/Base"], [<BoundaryIcon />, "Boundary Boss/Base"]]} />
      <Stack w="w-[145px]" rows={[[<SweptCutIcon />, "Swept Cut"], [<LoftCutIcon />, "Lofted Cut"], [<BoundaryCutIcon />, "Boundary Cut"]]} />
      <Sep />
      <Big icon={<FilletIcon />} lines={["Fillet"]} w="w-[50px]" drop />
      <Big icon={<LinearIcon />} lines={["Linear", "Pattern"]} w="w-[62px]" drop />
      <Stack w="ml-1.5 w-[88px]" rows={[[<RibIcon />, "Rib"], [<DraftIcon />, "Draft"], [<ShellIcon />, "Shell"]]} />
      <Stack w="w-[89px]" rows={[[<WrapIcon />, "Wrap"], [<DomeIcon />, "Dome"], [<MirrorIcon />, "Mirror"]]} />
      <Sep />
      <Big icon={<RefGeoIcon />} lines={["Reference", "Geometry"]} w="w-[90px]" drop />
      <Big icon={<CurvesIcon />} lines={["Curves"]} w="w-[62px]" drop />
      <Sep />
      <button type="button" className="ml-[5px] flex h-[100px] w-[84px] shrink-0 flex-col items-center rounded-lg border-2 border-[#8485a0] bg-linear-to-b from-[#c9c8e2] to-[#b5b4da] pt-[15px]">
        <InstantIcon />
        <span className={labelCls + " whitespace-nowrap"}>Instant3D</span>
      </button>
      <svg width="102" height="100" viewBox="0 0 102 100" fill="none" aria-hidden="true" className="ml-auto mr-3 shrink-0">
        <g fill="#cfd1de" fillOpacity=".6">
          <path d="M32 4C62-2 78 6 66 22 58 32 46 38 34 43 50 32 57 23 58 15 59 6 46 6 32 4Z" />
          <path d="M10 53C46 46 62 54 49 70 38 84 22 94 0 96L20 59 29 59 14 87C27 84 36 75 40 66 44 56 30 56 10 53Z" />
          <path d="M99 36C82 33 66 38 62 46 60 56 78 66 74 74 71 82 56 86 46 87 68 94 90 88 93 77 95 66 80 58 80 49 80 42 90 42 97 43Z" />
        </g>
      </svg>
    </div>
  );
}

const treeRows: [React.ReactNode, string, boolean][] = [
  [<SensorIcon />, "Sensors", false],
  [<AnnotIcon />, "Anotaciones", true],
  [<MaterialIcon />, "Material <not specified>", false],
  [<PlaneIcon />, "Alzado", false],
  [<PlaneIcon />, "Planta", false],
  [<PlaneIcon />, "Vista lateral", false],
  [<OriginIcon />, "Origen", false],
  [<Sketch3DIcon />, "(-) 3DSketch1", false],
  [<PlaneIcon />, "Plane2", false],
  [<LoftIcon />, "Loft3", true],
];

function LeftPanel() {
  const tabCls = "h-[27px] border-b-2 border-r-2 border-[#626476] bg-[#b6b8c9] text-[#5f6072]";
  return (
    <aside className="relative z-20 flex w-[281px] shrink-0 flex-col border-r-[3px] border-[#777a8c] bg-[#e1e5ee]">
      <div className="h-[30px] bg-[#cfd2e2]">
        <nav className="flex w-max items-start font-['Liberation_Sans',sans-serif] text-[17px]">
          <button type="button" className="h-[29px] w-[96px] border-b-2 border-r-2 border-[#50525f] bg-[#f0f1f6] font-bold text-[#3a3b48]">
            Features
          </button>
          <button type="button" className={tabCls + " w-[83px]"}>Sketch</button>
          <button type="button" className={tabCls + " w-[91px]"}>Evaluate</button>
          <button type="button" className={tabCls + " w-[92px]"}>DimXpert</button>
        </nav>
      </div>
      <div className="flex h-[42px] flex-col bg-[#cdd0e2] pt-[3px]">
        <div className="h-px bg-[#74768a]" />
        <div className="mt-auto flex items-end border-b-2 border-[#8385a0]">
          {[<PartIcon />, <PropIcon />, <ConfigIcon />, <DimIcon />].map((ic, i) => (
            <button
              key={i}
              type="button"
              aria-label="Manager tab"
              className={
                "mr-px flex items-center justify-center rounded-t-md border-2 border-b-0 " +
                (i === 0 ? "-mb-0.5 h-[32px] w-[39px] border-[#eceef5] bg-[#e6e9f2]" : "h-[30px] w-[39px] border-[#8c8ea3] bg-[#b7bacb]")
              }
            >
              {ic}
            </button>
          ))}
          <button type="button" aria-label="Expand" className="mb-1.5 ml-auto mr-2 text-[#33344a]">
            <svg width="14" height="13" viewBox="0 0 14 13" fill="none" stroke="currentColor" strokeWidth="1.600" aria-hidden="true">
              <path d="M1 1 6 6.500 1 12M7 1 12 6.500 7 12" />
            </svg>
          </button>
        </div>
      </div>
      <label className="mx-0.5 mt-[3px] flex h-[25px] items-center rounded-full border-2 border-[#a1a3bb] bg-linear-to-b from-[#dfe0f0] to-white pl-[9px]">
        <FunnelIcon />
        <input aria-label="Filter" className="min-w-0 flex-1 bg-transparent text-[15px] outline-none" />
      </label>
      <div className="mt-1 text-[16px] text-[#2c2d3a]">
        <div className="flex h-[26px] items-center gap-[7px] whitespace-pre pl-0.5">
          <PartIcon />
          OperaBasicas  (Predeterminado
        </div>
        <ul className="relative">
          <li aria-hidden="true" className="absolute bottom-[13px] left-[15px] top-0 border-l border-dotted border-[#7b7c8a]" />
          {treeRows.map(([ic, t, exp]) => (
            <li key={t} className="flex h-[26px] items-center pl-[9px]">
              <span className="relative flex w-[21px] items-center">
                {exp ? (
                  <button type="button" aria-label={"Expand " + t} className="flex size-[13px] items-center justify-center border border-[#8d8fa0] bg-[#f7f8fb]">
                    <svg width="7" height="7" viewBox="0 0 7 7" stroke="#222" aria-hidden="true">
                      <path d="M0 3.500H7M3.500 0V7" />
                    </svg>
                  </button>
                ) : (
                  <span className="w-1.5" />
                )}
                <span className="flex-1 border-t border-dotted border-[#7b7c8a]" />
              </span>
              {ic}
              <span className="ml-[7px] whitespace-nowrap">{t}</span>
            </li>
          ))}
        </ul>
      </div>
      <div className="mt-px h-0.5 bg-[#3f74c4]" />
      <div className="mt-auto flex h-[28px] items-center border-b-[3px] border-[#b9bbc6] bg-[#f0f1f4] px-1.5">
        <svg width="7" height="10" viewBox="0 0 7 10" aria-hidden="true"><path d="M7 0V10L0 5Z" fill="#3d3e48" /></svg>
        <button type="button" aria-label="Scroll" className="ml-3 flex h-[21px] w-[97px] items-center justify-center gap-[3px] border border-[#8f909b] bg-linear-to-b from-[#f7f7f9] to-[#c9cad2]">
          <span className="h-2 w-0.5 bg-[#5f606c]" />
          <span className="h-2 w-0.5 bg-[#5f606c]" />
          <span className="h-2 w-0.5 bg-[#5f606c]" />
        </button>
        <svg width="7" height="10" viewBox="0 0 7 10" aria-hidden="true" className="ml-auto"><path d="M0 0V10L7 5Z" fill="#3d3e48" /></svg>
      </div>
      <button type="button" aria-label="Collapse panel" className="absolute -right-[14px] top-[638px] flex h-[44px] w-3 flex-col items-center justify-center gap-1 rounded-r-md border-2 border-l-0 border-[#7d8092] bg-[#d8dae6]">
        {[0, 1, 2].map((i) => (
          <svg key={i} width="5" height="7" viewBox="0 0 5 7" aria-hidden="true"><path d="M5 0V7L0 3.500Z" fill="#4a4c5c" /></svg>
        ))}
      </button>
    </aside>
  );
}

function Viewport() {
  return (
    <section className="relative min-w-0 flex-1 bg-linear-to-b from-[#c3c6d0] to-[#c8c8d5]">
      <svg viewBox="290 152 1743 1321" className="absolute inset-0 h-full w-full" aria-hidden="true">
        <defs>
          <linearGradient id="side" x1="660" x2="1660" y1="0" y2="0" gradientUnits="userSpaceOnUse">
            <stop offset="0" stopColor="#62656f" />
            <stop offset=".08" stopColor="#585b67" />
            <stop offset=".28" stopColor="#51535f" />
            <stop offset=".46" stopColor="#535561" />
            <stop offset=".56" stopColor="#5a5d6a" />
            <stop offset=".66" stopColor="#575a67" />
            <stop offset=".85" stopColor="#5b5e6b" />
            <stop offset="1" stopColor="#5e616d" />
          </linearGradient>
          <linearGradient id="top" x1="0" x2="0" y1="372" y2="921" gradientUnits="userSpaceOnUse">
            <stop offset="0" stopColor="#7b7c8e" />
            <stop offset="1" stopColor="#818297" />
          </linearGradient>
        </defs>
        <path
          d="M686 650 660 948C659 962 667 972 680 979L1156 1256C1186 1272 1230 1272 1262 1256L1634 1035C1652 1025 1661 1016 1660 1000L1640 740 1635 655Z"
          fill="url(#side)"
          stroke="#15161d"
          strokeWidth="1.500"
          strokeLinejoin="round"
        />
        <ellipse cx="1160" cy="647" rx="475" ry="274" fill="url(#top)" stroke="#15161d" strokeWidth="1.500" />
      </svg>
      <div className="relative z-10 flex h-[42px] items-center">
        <div className="flex-1" />
        <div className="flex items-center gap-[6px] pl-2.5">
          <div className="flex items-center gap-[7px] pr-0.5">
            <ViewTool icon={<ZoomFitIcon />} />
            <ViewTool icon={<ZoomAreaIcon />} />
            <ViewTool icon={<PrevViewIcon />} />
            <ViewTool icon={<SectionIcon />} />
          </div>
          <ViewTool icon={<ViewOrientIcon />} drop />
          <ViewTool icon={<DisplayIcon />} drop />
          <ViewTool icon={<GlassesIcon />} drop />
          <ViewTool icon={<BallIcon />} />
          <ViewTool icon={<SceneIcon />} drop />
          <ViewTool icon={<GoldBallIcon />} drop />
        </div>
        <div className="flex flex-1 items-center justify-end gap-[15px] pr-3">
          <button type="button" aria-label="Minimize document"><MinIcon c="#4a4c5c" /></button>
          <button type="button" aria-label="Restore document"><RestoreIcon c="#4a4c5c" /></button>
          <button type="button" aria-label="Close document"><CloseIcon c="#5f6172" /></button>
        </div>
      </div>
      <div className="absolute bottom-px left-4 w-[100px]">
        <svg width="84" height="84" viewBox="0 0 84 84" fill="none" aria-hidden="true" className="mb-6 block">
          <path d="M42 50V20" stroke="#1b6e24" strokeWidth="5" />
          <path d="M35 28 42 15 49 28Q42 32 35 28Z" fill="#1d7a28" stroke="#0c4a14" />
          <path d="M42 51 22 62" stroke="#1a1d9c" strokeWidth="5" />
          <path d="M10 69 18 57 25 68Z" fill="#2023b0" stroke="#10126e" />
          <path d="M42 51 62 62" stroke="#b31a1d" strokeWidth="5" />
          <path d="M75 69 66 57 59 68Z" fill="#c92023" stroke="#7e0d10" />
          <path d="M37 1 42 7 47 1M42 7V13" stroke="#2f7a3c" strokeWidth="1.500" />
          <path d="M2 65H9L2 76H9" stroke="#2a2dc0" strokeWidth="1.500" />
          <path d="M72 65 80 77M80 65 72 77" stroke="#e0454c" strokeWidth="1.500" />
        </svg>
        <div className="whitespace-nowrap text-[17px] font-bold leading-[24px] text-[#2d2d5e]">*Isometric</div>
      </div>
    </section>
  );
}

function TaskPane() {
  const icons = [<HomeIcon />, <LibraryIcon />, <FolderOpenIcon />, <SearchRedIcon />, <PaletteIcon />, <BallIcon s={22} />, <CustomPropIcon />];
  return (
    <aside className="relative z-20 w-2 shrink-0 border-l-2 border-[#23242c] bg-[#6c7780]">
      <div className="absolute right-0 top-[87px] flex w-[34px] flex-col gap-px">
        {icons.map((ic, i) => (
          <button
            key={i}
            type="button"
            aria-label="Task pane tab"
            className={
              "flex h-[34px] items-center justify-center rounded-l-md border-2 border-r-0 border-[#8a8da0] pl-0.5 " +
              (i === 0 ? "bg-[#f3f4fa]" : "bg-[#bfc1cf]")
            }
          >
            {ic}
          </button>
        ))}
      </div>
    </aside>
  );
}

function BottomTabs() {
  const nav = ["M4 2V12M13 2V12L6 7Z", "M11 2V12L4 7Z", "M4 2V12L11 7Z", "M12 2V12M3 2V12L10 7Z"];
  return (
    <div className="flex h-[23px] shrink-0 items-start border-b border-t-2 border-[#23242c] border-b-[#8d8f9e] bg-[#e3e4f0] pl-[3px] font-['Liberation_Sans',sans-serif] text-[17px] leading-none">
      {nav.map((d) => (
        <button key={d} type="button" aria-label="Scroll tabs" className="flex h-5 w-[23px] items-center justify-center border-r-2 border-[#8b8da0] bg-[#a9abbb]">
          <svg width="15" height="14" viewBox="0 0 15 14" aria-hidden="true"><path d={d} fill="#85879a" stroke="#85879a" /></svg>
        </button>
      ))}
      <button type="button" className="ml-1 h-5 w-[80px] border-b-2 border-l-2 border-r-2 border-[#50525f] bg-[#dcdde8] font-bold text-[#20212c]">Model</button>
      <button type="button" className="h-[19px] w-[149px] border-b-2 border-r-2 border-[#50525f] bg-[#c0c2d0] pr-2 text-[#2c2d3a]">Motion Study 1</button>
    </div>
  );
}

export default function App() {
  return (
    <div className="flex h-screen flex-col overflow-hidden bg-[#cc0099] pb-[11px] pl-[9px] pr-2 pt-[3px] font-['Noto_Sans',sans-serif]">
      <TitleBar />
      <Ribbon />
      <main className="flex min-h-0 flex-1">
        <div className="flex min-w-0 flex-1 flex-col">
          <div className="flex min-h-0 flex-1">
            <LeftPanel />
            <Viewport />
          </div>
          <BottomTabs />
        </div>
        <TaskPane />
      </main>
      <footer className="flex h-[29px] shrink-0 items-center border-b-2 border-t border-[#84869a] border-t-[#9fa1b0] bg-linear-to-b from-[#cfd0df] to-[#c3c9d8] pl-[3px] text-[16px] text-[#23243a]">
        <span>Adds a reference plane.</span>
        <span className="ml-auto mr-[130px] flex items-center">
          <span className="mr-2 h-5 w-px bg-[#dfe0ea]" />
          Editing Part
          <span className="ml-2 h-5 w-px bg-[#dfe0ea]" />
        </span>
        <span className="mr-5">
          <TagIcon />
        </span>
      </footer>
    </div>
  );
}
